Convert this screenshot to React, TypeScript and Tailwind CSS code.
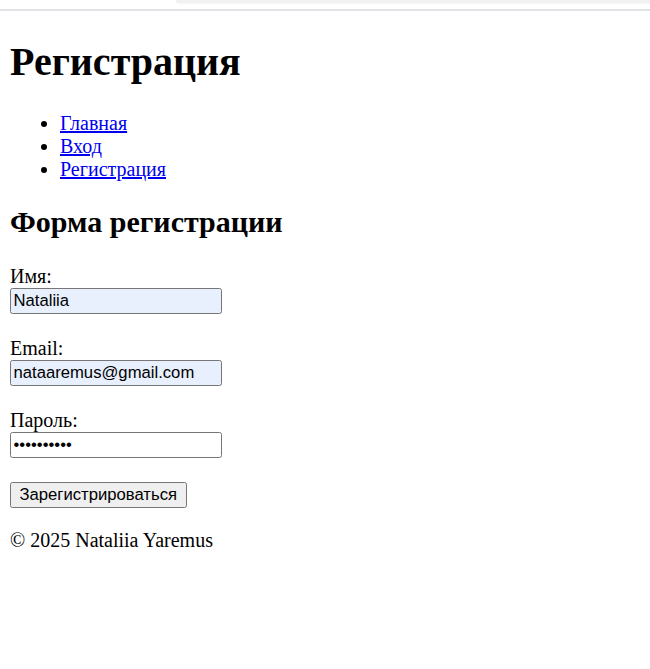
import React from "react";

export default function App() {
  const serif = { fontFamily: '"Liberation Serif", "Times New Roman", serif' };
  const sans = { fontFamily: '"Liberation Sans", Arial, sans-serif' };
  return (
    <div className="w-[650px] h-[669px] bg-white text-black leading-[normal]" style={serif}>
      <div className="h-[9px] flex items-start">
        <div className="ml-[176px] flex-1 h-[3px] bg-[#f1f1f1] rounded-bl-[3px] shadow-[0_1px_1px_rgba(0,0,0,0.04)]" />
      </div>
      <div className="h-[2px] bg-[#e1e3e7]" />
      <div className="px-[10px] flow-root">
        <h1 className="text-[40px] font-bold leading-[normal] mt-[26.8px] mb-[26.8px]">Регистрация</h1>
        <nav>
          <ul className="list-disc pl-[50px] my-[20px] text-[20px] leading-[normal]">
            <li><a href="#" className="text-[#0000ee] underline">Главная</a></li>
            <li><a href="#" className="text-[#0000ee] underline">Вход</a></li>
            <li><a href="#" className="text-[#0000ee] underline">Регистрация</a></li>
          </ul>
        </nav>
        <h2 className="text-[30px] font-bold leading-[normal] mt-[24.9px] mb-[25.9px]">Форма регистрации</h2>
        <form className="text-[20px] leading-[normal]" onSubmit={(e) => e.preventDefault()}>
          <label>Имя:</label>
          <br />
          <input
            type="text"
            defaultValue="Nataliia"
            className="w-[212px] h-[26px] align-baseline border border-[#767676] rounded-[2.5px] bg-[#e8f0fe] px-[2.5px] py-[1.25px] text-[16.67px] text-black outline-none"
            style={sans}
          />
          <br />
          <br />
          <label>Email:</label>
          <br />
          <input
            type="email"
            defaultValue="nataaremus@gmail.com"
            className="w-[212px] h-[26px] align-baseline border border-[#767676] rounded-[2.5px] bg-[#e8f0fe] px-[2.5px] py-[1.25px] text-[16.67px] text-black outline-none"
            style={sans}
          />
          <br />
          <br />
          <label>Пароль:</label>
          <br />
          <input
            type="password"
            defaultValue="1234567890"
            className="w-[212px] h-[26px] align-baseline border border-[#767676] rounded-[2.5px] bg-white px-[2.5px] py-[1.25px] text-[16.67px] text-black outline-none"
            style={sans}
          />
          <br />
          <br />
          <button
            type="submit"
            className="h-[26px] mt-[1px] align-baseline border border-[#767676] rounded-[2.5px] bg-[#efefef] px-[8.5px] text-[16.67px] text-black"
            style={sans}
          >
            Зарегистрироваться
          </button>
        </form>
        <footer>
          <p className="text-[20px] leading-[normal] mt-[21px] mb-[20px]">© 2025 Nataliia Yaremus</p>
        </footer>
      </div>
    </div>
  );
}
